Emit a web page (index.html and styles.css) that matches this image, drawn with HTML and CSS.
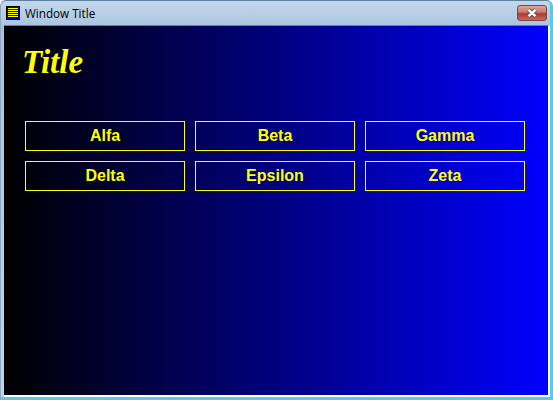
FILE: index.html
```html
<!DOCTYPE html>
<html lang="en">
<head>
  <meta charset="UTF-8" />
  <title>Window Title</title>
  <link rel="stylesheet" href="styles.css">
</head>
<body>
  <div class="window">
    <div class="title-bar">
      <svg class="app-icon" width="14" height="14" viewBox="0 0 14 14">
        <rect x="0.5" y="0.5" width="13" height="13" fill="#0000b0" stroke="#000"/>
        <path d="M2 2.5h10M2 4.5h10M2 6.5h10M2 8.5h10M2 10.5h10" stroke="#ff0" fill="none"/>
      </svg>
      <span class="window-title">Window Title</span>
      <div class="close-btn">
        <svg width="14" height="10" viewBox="0 0 14 10">
          <path d="M3.5 1.8l7 6.4M10.5 1.8l-7 6.4" stroke="#50535a" stroke-width="4" fill="none"/>
          <path d="M3.5 1.8l7 6.4M10.5 1.8l-7 6.4" stroke="#fff" stroke-width="2.4" fill="none"/>
        </svg>
      </div>
    </div>
    <div class="client">
      <h1 class="title">Title</h1>
      <div class="buttons">
        <button class="btn">Alfa</button>
        <button class="btn">Beta</button>
        <button class="btn">Gamma</button>
        <button class="btn">Delta</button>
        <button class="btn">Epsilon</button>
        <button class="btn">Zeta</button>
      </div>
    </div>
  </div>
</body>
</html>
```

FILE: styles.css
```css
html, body {
  margin: 0;
  padding: 0;
  height: 100%;
  overflow: hidden;
}

.window {
  box-sizing: border-box;
  height: 400px;
  display: flex;
  flex-direction: column;
  border-radius: 6px 6px 0 0;
  background: linear-gradient(to bottom, #c4d8ec 0, #a9c4e0 26px, #bcd6ef 100%);
  border-top: 1px solid #5f7f9f;
  border-left: 1px solid #8fa8c0;
  border-right: 3px solid #5cc8e6;
  border-bottom: 3px solid #5cc8e6;
}

.title-bar {
  height: 24px;
  flex: none;
  display: flex;
  align-items: center;
  padding: 0 3px 0 5px;
}

.app-icon {
  flex: none;
}

.window-title {
  margin-left: 5px;
  font-family: "Open Sans", "Noto Sans", sans-serif;
  font-size: 11.7px;
  color: #000;
  flex: 1;
}

.close-btn {
  width: 30px;
  height: 16px;
  align-self: flex-start;
  margin-top: 4px;
  box-sizing: border-box;
  display: flex;
  align-items: center;
  justify-content: center;
  border: 1px solid #6e4a48;
  border-radius: 3px;
  background: linear-gradient(to bottom, #dba79f 0, #c9756a 45%, #b2392c 55%, #c96a58 100%);
}

.client {
  flex: 1;
  margin-left: 3px;
  padding-left: 21px;
  background: linear-gradient(to right, #000, #00f);
  border-top: 1px solid #6d7f92;
  border-right: 2px solid #fff;
  border-bottom: 2px solid #fff;
}

.title {
  margin: 18px 0 0 -3px;
  height: 77px;
  font-family: "Liberation Serif", serif;
  font-style: italic;
  font-weight: bold;
  font-size: 33px;
  line-height: 36px;
  color: #ff0;
}

.buttons {
  display: grid;
  grid-template-columns: repeat(3, 160px);
  grid-auto-rows: 30px;
  gap: 10px;
}

.btn {
  margin: 0;
  padding: 0;
  background: transparent;
  border: 1px solid #ff0;
  color: #ff0;
  font-family: "Liberation Sans", sans-serif;
  font-weight: bold;
  font-size: 16px;
}
```
